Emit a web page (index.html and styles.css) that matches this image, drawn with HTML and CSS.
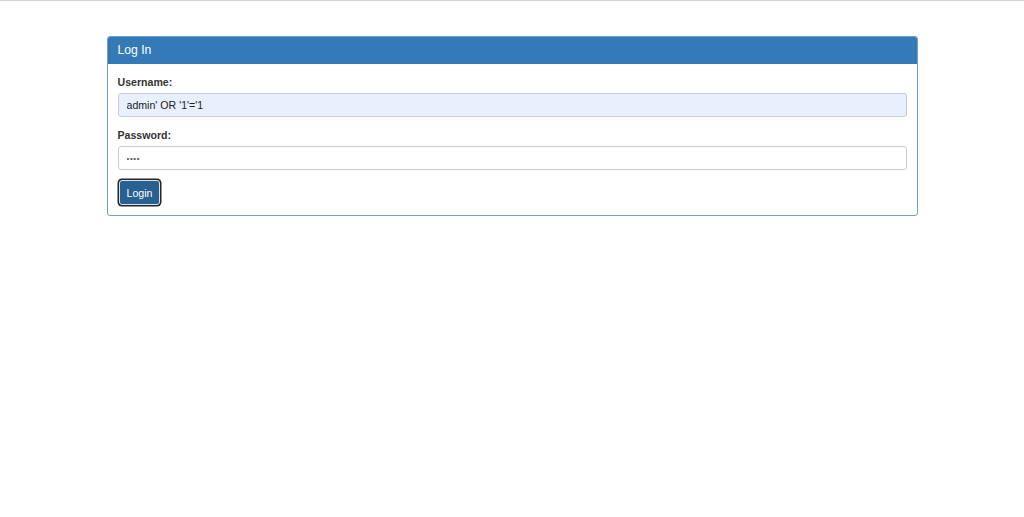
FILE: index.html
```html
<!DOCTYPE html>
<html lang="en">
<head>
    <meta charset="UTF-8">
    <meta name="viewport" content="width=device-width, initial-scale=1.0">
    <title>Log In</title>
    <link rel="stylesheet" href="styles.css">
</head>
<body>
    <div class="container">
        <div class="panel">
            <div class="panel-heading">Log In</div>
            <div class="panel-body">
                <form>
                    <div class="form-group">
                        <label for="username">Username:</label>
                        <input type="text" id="username" class="autofill" value="admin' OR '1'='1">
                    </div>
                    <div class="form-group">
                        <label for="password">Password:</label>
                        <input type="password" id="password" class="secret" value="abcd">
                    </div>
                    <button type="button" class="btn">Login</button>
                </form>
            </div>
        </div>
    </div>
</body>
</html>
```

FILE: styles.css
```css
body {
    margin: 0;
    border-top: 1px solid #d4d4d4;
    font-family: "Liberation Sans", Arial, sans-serif;
    background-color: #fff;
    color: #333;
}
.container {
    width: 811px;
    margin: 35px auto 0;
}
.panel {
    border: 1px solid #6f9fcc;
    border-radius: 3px;
    background-color: #fff;
}
.panel-heading {
    background-color: #337ab7;
    color: #fff;
    font-size: 12.2px;
    line-height: 18px;
    padding: 4px 10px 5px;
    border-radius: 2px 2px 0 0;
}
.panel-body {
    padding: 10px 10px 10px;
}
.form-group {
    margin-bottom: 10px;
}
label {
    display: block;
    font-size: 10.6px;
    font-weight: bold;
    line-height: 16px;
    margin-bottom: 3px;
}
input {
    display: block;
    width: 100%;
    height: 24px;
    box-sizing: border-box;
    padding: 0 8px;
    border: 1px solid #ccc;
    border-radius: 3px;
    font-family: inherit;
    font-size: 10.6px;
    color: #222;
    background-color: #fff;
}
input.autofill {
    background-color: #e8f0fe;
}
input.secret {
    font-size: 8px;
    color: #555;
    letter-spacing: 0.6px;
}
.btn {
    display: block;
    height: 25px;
    padding: 0 7px;
    font-family: inherit;
    font-size: 10.6px;
    color: #fff;
    background-color: #286090;
    border: 1px solid #d9e3ec;
    border-radius: 3px;
    box-shadow: 0 0 0 1.5px #262626;
    margin-left: 1px;
    cursor: pointer;
}
```
